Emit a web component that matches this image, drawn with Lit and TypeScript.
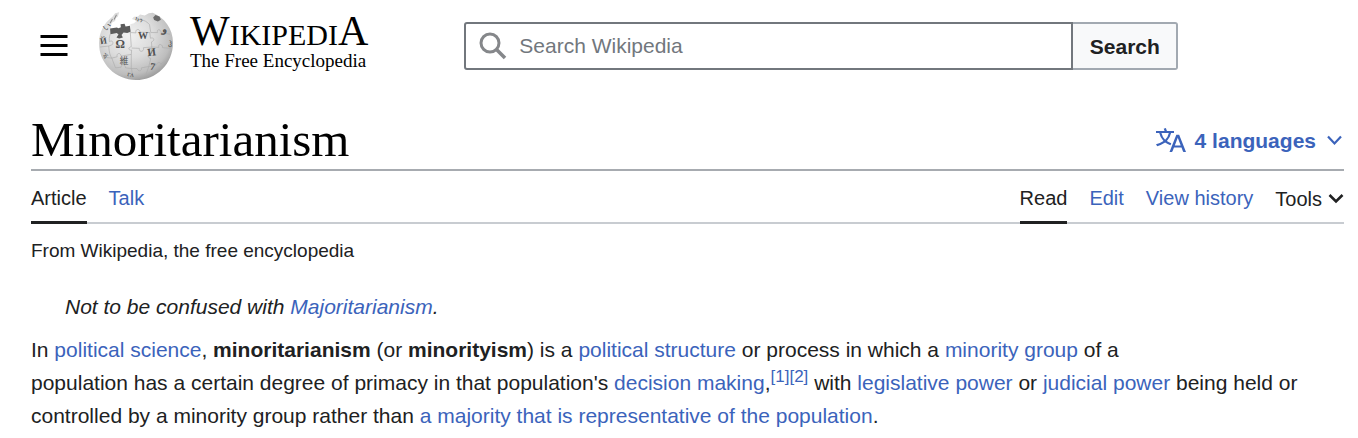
import { LitElement, html, css, svg } from "lit";
import { customElement } from "lit/decorators.js";

const globe = svg`
  <defs>
    <radialGradient id="ball" cx="0.4" cy="0.34" r="0.74">
      <stop offset="0" stop-color="#f1f1f1" />
      <stop offset="0.45" stop-color="#dcdcdc" />
      <stop offset="0.78" stop-color="#bdbdbd" />
      <stop offset="1" stop-color="#8c8c8c" />
    </radialGradient>
  </defs>
  <path fill="url(#ball)" d="M40 14 L48 4 L60 1 L56 14 L50 18 L48 27 L38 32 L34 50 L94 50 L93 36 L104 33 L112 26 L98 21 L104 14 L116 13 L122 7 L136 10 L148 4 L160 2 C194 17 220 48 220 91 C220 154 171 202 110 202 C50 202 0 154 0 93 C0 59 16 32 40 14Z" />
  <path fill="#5c5c5c" d="M33 49 L53 46 L58 48 L65 45 L64 36 L76 35 L79 43 L92 41 L94 59 L84 62 L73 61 L67 68 L71 76 L60 79 L52 76 L58 67 L53 62 L34 66Z" />
  <g fill="none" stroke="#adadad" stroke-width="2">
    <path d="M33 66 C30 77 30 82 31 88 C40 82 45 92 38 98 L29 101 C30 120 33 130 38 137 L54 133 C51 122 64 119 66 131 L96 126 L97 113 C88 115 85 105 96 103 L93 60" />
    <path d="M93 61 L110 62 C106 50 122 48 122 60 L151 61 L153 78 C163 74 168 84 156 89 L157 104 L132 106 C136 119 118 121 120 108 L97 107" />
    <path d="M112 25 C130 20 140 27 150 37 L154 61 L174 61 C171 49 184 50 185 62 L211 66" />
    <path d="M157 104 L178 105 C174 93 190 94 189 106 L213 108 M157 104 L155 126 C145 124 143 137 154 138 L148 162 L126 166 C129 176 117 179 113 168 L96 168 L96 126" />
    <path d="M38 137 L49 166 L66 164 C66 154 78 154 79 166 L97 168 L100 197 M148 162 L171 158 C171 148 184 148 183 155 L195 147 M148 162 L139 188 M3 104 L29 101 M12 134 L38 137" />
  </g>
  <g fill="#505050" font-family="Liberation Serif, serif" text-anchor="middle">
    <text x="63" y="108" font-size="35" font-weight="bold">Ω</text>
    <text x="131" y="79" font-size="30" font-weight="bold">W</text>
    <text x="156" y="130" font-size="33" font-weight="bold" transform="rotate(-7 156 118)">И</text>
    <text x="75" y="156" font-size="26" font-family="Noto Sans CJK JP, sans-serif">維</text>
    <text x="195" y="61" font-size="30" font-weight="bold" transform="rotate(12 195 52)">و</text>
    <text x="160" y="172" font-size="30" font-weight="bold" transform="rotate(8 160 162)">7</text>
    <text x="13" y="94" font-size="26" font-weight="bold" transform="rotate(-9 13 86)">Й</text>
    <text x="17" y="138" font-size="23" transform="rotate(35 17 130)">ষ</text>
    <text x="24" y="52" font-size="24" transform="rotate(-32 24 45)">い</text>
    <text x="211" y="104" font-size="24">ჰ</text>
    <text x="94" y="192" font-size="22" transform="rotate(9 94 185)">ᴦᴧ</text>
    <text x="119" y="29" font-size="20" transform="rotate(10 119 22)">ካን</text>
  </g>
  <path fill="#6a6a6a" d="M161 16 L168 9 L180 13 L184 23 L175 28 L164 24Z" />
  <path fill="none" stroke="#8a8a8a" stroke-width="3" d="M52 8 L45 22 M40 21 L33 33" />
`;

@customElement("app-root")
export class AppRoot extends LitElement {
  static styles = css`
    :host {
      display: block;
      min-height: 100vh;
      background: #fff;
      color: #202122;
      font-family: "Liberation Sans", Arial, sans-serif;
      font-size: 21px;
      line-height: 33px;
    }
    * {
      box-sizing: border-box;
    }
    a {
      color: #3b63bb;
      text-decoration: none;
    }
    a:hover {
      text-decoration: underline;
    }
    button {
      font: inherit;
      color: inherit;
      background: none;
      border: 0;
      padding: 0;
      cursor: pointer;
    }
    svg {
      display: block;
      flex: none;
    }
    .page {
      padding: 0 14px 0 31px;
    }
    .header {
      display: flex;
      align-items: center;
      gap: 96px;
      height: 92px;
    }
    .brand {
      display: flex;
      align-items: center;
      gap: 31px;
      padding-left: 9px;
      flex: none;
    }
    .logo {
      display: flex;
      align-items: center;
      gap: 17px;
      color: #000;
      font-family: "Liberation Serif", "Times New Roman", serif;
    }
    .logo:hover {
      text-decoration: none;
    }
    .words {
      display: flex;
      flex-direction: column;
      padding-bottom: 6px;
      white-space: nowrap;
    }
    .wordmark {
      font-size: 30px;
      line-height: 33px;
    }
    .cap {
      font-size: 42px;
      line-height: 33px;
    }
    .tagline {
      font-size: 19px;
      line-height: 20px;
    }
    .search {
      display: flex;
      flex: 1;
      max-width: 714px;
      height: 48px;
    }
    .field {
      display: grid;
      flex: 1;
      align-items: center;
      min-width: 0;
    }
    .field > * {
      grid-area: 1 / 1;
    }
    .field svg {
      margin-left: 14px;
      pointer-events: none;
      z-index: 1;
    }
    .input {
      width: 100%;
      height: 100%;
      padding: 0 12px 0 53px;
      border: 2px solid #72777d;
      border-radius: 3px 0 0 3px;
      background: #fff;
      color: inherit;
      font: inherit;
    }
    .input::placeholder {
      color: #72777d;
      opacity: 1;
    }
    .submit {
      width: 105px;
      border: 2px solid #a2a9b1;
      border-left: 0;
      border-radius: 0 3px 3px 0;
      background: #f8f9fa;
      font-weight: bold;
    }
    .titlebar {
      display: flex;
      align-items: center;
      justify-content: space-between;
      padding: 20px 0 1px;
      border-bottom: 2px solid #a7abb0;
    }
    .title {
      margin: 0;
      color: #000;
      font-family: "Liberation Serif", Georgia, serif;
      font-size: 49px;
      font-weight: normal;
      line-height: 56px;
    }
    .languages {
      display: flex;
      align-items: center;
      gap: 9px;
      color: #3b63bb;
      font-weight: bold;
    }
    .languages .arrow {
      margin-left: 2px;
    }
    .toolbar {
      display: flex;
      justify-content: space-between;
      height: 53px;
      border-bottom: 2px solid #c8ccd1;
      font-size: 20px;
      line-height: 24px;
    }
    .tabs {
      display: flex;
      gap: 22px;
    }
    .tab {
      height: 53px;
      padding-top: 15px;
      border-bottom: 3px solid transparent;
      white-space: nowrap;
    }
    .tab.active {
      color: #202122;
      border-color: #202122;
    }
    .tools {
      display: flex;
      align-items: center;
      gap: 6px;
      height: 53px;
      padding-top: 2px;
    }
    .siteline {
      padding-top: 15px;
      font-size: 19px;
      line-height: 24px;
    }
    .hatnote {
      padding: 27px 0 10px 34px;
      font-style: italic;
    }
    .lead {
      margin: 0;
    }
    sup {
      font-size: 17px;
      line-height: 0;
      vertical-align: 8px;
    }
  `;

  render() {
    return html`
      <div class="page">
        <header class="header">
          <div class="brand">
            <button aria-label="Main menu">
              <svg width="28" height="24" viewBox="0 0 28 24" stroke="#000" stroke-width="3">
                <path d="M0.5 2.5h27M0.5 11.5h27M0.5 20.5h27" />
              </svg>
            </button>
            <a class="logo" href="#main">
              <svg width="74" height="68" viewBox="0 0 220 202" aria-hidden="true">${globe}</svg>
              <span class="words">
                <span class="wordmark"><span class="cap">W</span>IKIPEDI<span class="cap">A</span></span>
                <span class="tagline">The Free Encyclopedia</span>
              </span>
            </a>
          </div>
          <form class="search" role="search" @submit=${(e: Event) => e.preventDefault()}>
            <label class="field">
              <svg width="30" height="30" viewBox="0 0 30 30" fill="none" stroke="#85878a" aria-hidden="true">
                <circle cx="12" cy="12" r="9" stroke-width="3" />
                <path d="M18.5 18.5 27 27" stroke-width="3.5" />
              </svg>
              <input class="input" type="search" placeholder="Search Wikipedia" aria-label="Search Wikipedia" />
            </label>
            <button class="submit">Search</button>
          </form>
        </header>

        <main id="main">
          <div class="titlebar">
            <h1 class="title">Minoritarianism</h1>
            <button class="languages">
              <svg width="30" height="30" viewBox="0 0 20 20" fill="currentColor" aria-hidden="true">
                <path d="M20 18h-1.44a.6.6 0 0 1-.4-.12.8.8 0 0 1-.23-.31L17 15h-5l-1 2.54a.8.8 0 0 1-.22.3.6.6 0 0 1-.4.14H9l4.55-11.47h1.89zm-3.53-4.31L14.89 9.5a12 12 0 0 1-.39-1.24q-.09.37-.19.69l-.19.56-1.58 4.19zm-6.3-1.58a13.4 13.4 0 0 1-2.91-1.41 11.46 11.46 0 0 0 2.81-5.37H12V4H7.31a4 4 0 0 0-.2-.56C6.87 2.79 6.6 2 6.6 2l-1.47.5s.4.89.6 1.5H0v1.33h2.15A11.23 11.23 0 0 0 5 10.7a17.2 17.2 0 0 1-5 2.1q.56.82.87 1.38a23.3 23.3 0 0 0 5.22-2.51 15.6 15.6 0 0 0 3.56 1.77zM3.63 5.33h4.91a8.1 8.1 0 0 1-2.45 4.45 9.1 9.1 0 0 1-2.46-4.45" />
              </svg>
              <span>4 languages</span>
              <svg class="arrow" width="17" height="12" viewBox="0 0 17 12" fill="none" stroke="currentColor" stroke-width="2.2" aria-hidden="true">
                <path d="M1 2.5 7.5 9.5 14 2.5" />
              </svg>
            </button>
          </div>

          <div class="toolbar">
            <nav class="tabs" aria-label="Namespaces">
              <a class="tab active" href="#article">Article</a>
              <a class="tab" href="#talk">Talk</a>
            </nav>
            <nav class="tabs" aria-label="Views">
              <a class="tab active" href="#read">Read</a>
              <a class="tab" href="#edit">Edit</a>
              <a class="tab" href="#history">View history</a>
              <button class="tools">
                <span>Tools</span>
                <svg width="16" height="12" viewBox="0 0 16 12" fill="none" stroke="currentColor" stroke-width="2.6" aria-hidden="true">
                  <path d="M1.5 2 8 8.5 14.5 2" />
                </svg>
              </button>
            </nav>
          </div>

          <div class="siteline">From Wikipedia, the free encyclopedia</div>
          <div class="hatnote">Not to be confused with <a href="#majoritarianism">Majoritarianism</a>.</div>
          <p class="lead">
            In <a href="#science">political science</a>, <b>minoritarianism</b> (or <b>minorityism</b>) is a
            <a href="#structure">political structure</a> or process in which a
            <a href="#minority">minority group</a> of a<br />
            population has a certain degree of primacy in that population's
            <a href="#decision">decision making</a>,<sup><a href="#note1">[1]</a><a href="#note2">[2]</a></sup> with
            <a href="#legislative">legislative power</a> or <a href="#judicial">judicial power</a> being held or
            controlled by a minority group rather than
            <a href="#majority">a majority that is representative of the population</a>.
          </p>
        </main>
      </div>
    `;
  }
}
